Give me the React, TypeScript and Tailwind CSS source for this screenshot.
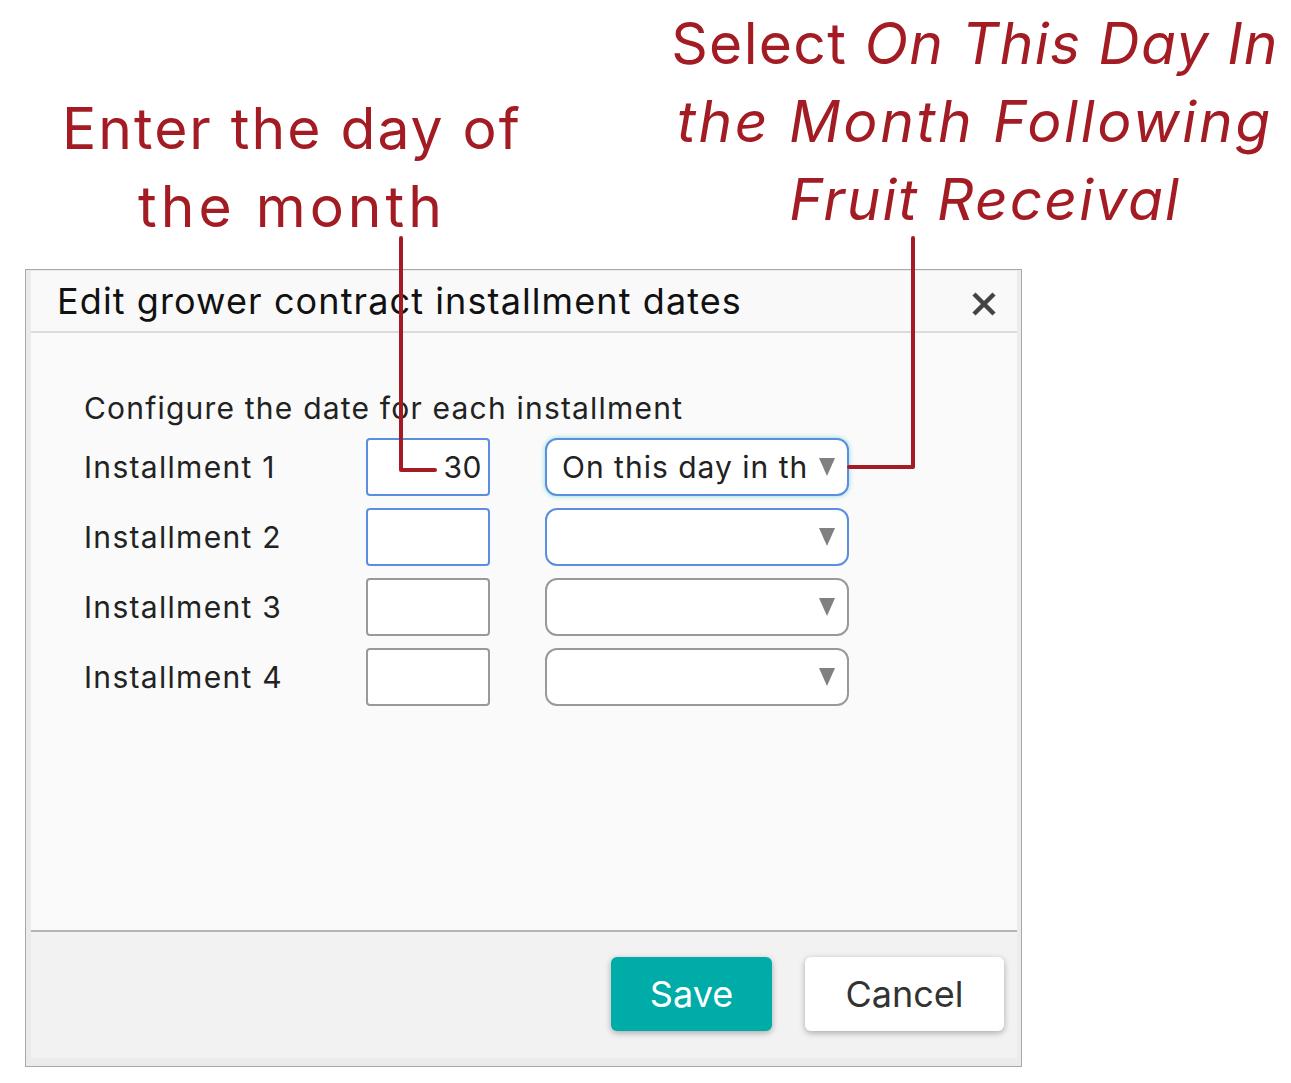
import React from 'react';

const font = { fontFamily: 'Inter, "Open Sans", sans-serif' };

const rows = [
  { label: 'Installment 1', day: '30', option: 'On this day in th', active: true, focused: true },
  { label: 'Installment 2', day: '', option: '', active: true, focused: false },
  { label: 'Installment 3', day: '', option: '', active: false, focused: false },
  { label: 'Installment 4', day: '', option: '', active: false, focused: false },
];

const Arrow: React.FC = () => (
  <svg width="16" height="18" viewBox="0 0 16 18" className="shrink-0">
    <path d="M0 0 H16 L8 18 Z" fill="#808080" />
  </svg>
);

const App: React.FC = () => {
  return (
    <div className="relative w-[1291px] h-[1083px] bg-white overflow-hidden" style={font}>
      {/* annotations */}
      <div className="flex h-[269px]">
        <div className="w-[584px] pt-[90px] text-center text-[57px] leading-[78px] text-[#a31b23]">
          <div className="tracking-[2px]">Enter the day of</div>
          <div className="tracking-[4px]">the month</div>
        </div>
        <div className="ml-[76px] w-[630px] pt-[5px] text-center text-[57px] leading-[78px] text-[#a31b23]">
          <div className="tracking-[1.3px]">
            Select <span className="italic">On This Day In</span>
          </div>
          <div className="italic tracking-[2.7px]">the Month Following</div>
          <div className="italic tracking-[2px] pl-[20px]">Fruit Receival</div>
        </div>
      </div>

      {/* dialog */}
      <div className="ml-[25px] w-[997px] h-[798px] border border-[#a9a9a9] bg-[#ebebeb] pl-[5px] pr-[4px] pt-[1px] pb-[8px] flex flex-col">
        <div className="h-[62px] shrink-0 bg-[#f9f9f9] border-b-2 border-[#dcdcdc] flex items-center pl-[26px] pr-[20px]">
          <h1 className="flex-1 text-[36px] tracking-[1.1px] text-[#111]">Edit grower contract installment dates</h1>
          <svg width="26" height="26" viewBox="0 0 26 26" className="mt-[6px]">
            <path d="M3 3 L23 23 M23 3 L3 23" stroke="#444" strokeWidth="4.5" />
          </svg>
        </div>

        <div className="flex-1 bg-[#fafafa] border-b-2 border-[#b4b4b4] pl-[53px] pt-[57px] text-[#222]">
          <p className="text-[30px] leading-[36px] tracking-[1.2px]">Configure the date for each installment</p>
          <div className="mt-[12px] flex flex-col gap-[12px]">
            {rows.map((row) => (
              <div key={row.label} className="flex items-center h-[58px]">
                <div className="w-[282px] text-[30px] tracking-[1.3px]">{row.label}</div>
                <div
                  className={`w-[124px] h-[58px] rounded-[4px] border-2 bg-white flex items-center justify-end pr-[6px] text-[30px] tracking-[0.5px] ${
                    row.active ? 'border-[#5b8de0]' : 'border-[#999]'
                  }`}
                >
                  {row.day}
                </div>
                <div
                  className={`ml-[55px] w-[304px] h-[58px] rounded-[12px] border-2 bg-white flex items-center pl-[15px] pr-[12px] ${
                    row.active ? 'border-[#5b8de0]' : 'border-[#999]'
                  } ${row.focused ? 'shadow-[0_0_5px_#7fdcd6]' : ''}`}
                >
                  <span className="flex-1 overflow-hidden whitespace-nowrap text-[30px] tracking-[1px]">{row.option}</span>
                  <Arrow />
                </div>
              </div>
            ))}
          </div>
        </div>

        <div className="h-[126px] shrink-0 bg-[#f2f2f2] flex justify-end items-start gap-[33px] pt-[25px] pr-[13px]">
          <button className="w-[161px] h-[74px] rounded-[6px] bg-[#00aca8] text-white text-[36px] shadow-[0_2px_6px_rgba(0,0,0,0.3)]">
            Save
          </button>
          <button className="w-[199px] h-[74px] rounded-[6px] bg-white text-[#333] text-[36px] shadow-[0_2px_6px_rgba(0,0,0,0.3)]">
            Cancel
          </button>
        </div>
      </div>

      {/* pointer lines */}
      <svg className="absolute inset-0 pointer-events-none" width="1291" height="1083">
        <path d="M401 238 V470 H435" fill="none" stroke="#a31b23" strokeWidth="4" strokeLinecap="round" strokeLinejoin="round" />
        <path d="M913 238 V467 H849" fill="none" stroke="#a31b23" strokeWidth="4" strokeLinecap="round" strokeLinejoin="round" />
      </svg>
    </div>
  );
};

export default App;
